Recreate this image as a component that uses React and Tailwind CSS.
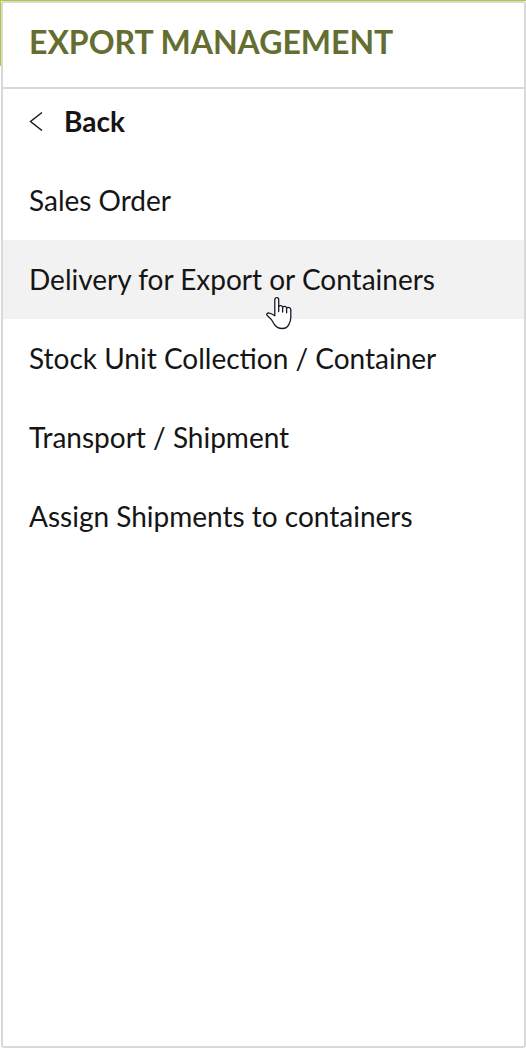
const items = [
  { label: "Sales Order" },
  { label: "Delivery for Export or Containers", active: true },
  { label: "Stock Unit Collection / Container" },
  { label: "Transport / Shipment" },
  { label: "Assign Shipments to containers" },
];

function HandCursor() {
  return (
    <svg
      className="pointer-events-none absolute top-14 left-[262px] z-10 h-[34px] w-7"
      viewBox="0 0 28 34"
      fill="white"
      stroke="#17172b"
      strokeWidth="1.3"
      strokeLinecap="round"
      strokeLinejoin="round"
      aria-hidden="true"
    >
      <path d="M9.8 19.8V3.8C9.8 2.4 10.6 1.7 11.7 1.7S13.7 2.4 13.7 3.8V10.2C14.8 9.3 17.2 9.3 17.6 11.2C18.8 10 21.2 10.2 21.6 12C22.8 10.9 25.8 11.4 25.8 13.8V21.5C25.8 24.5 25 26.4 23.8 28.6C22.4 31.4 20 32.5 17.4 32.5C13 32.5 10.8 31 8.8 27.6C7.4 24.6 5 21.8 2.3 19.6C0.8 18.2 2.3 16.7 4.4 17.1C6.2 17.4 8.1 18.6 9.8 19.8Z" />
      <path d="M13.7 10V15.5M17.6 11.2V16M21.6 12V16.8" fill="none" />
    </svg>
  );
}

export default function App() {
  return (
    <div className="flex min-h-screen border-t border-[#b5c833] bg-white font-['Lato','Carlito',sans-serif] text-[28px] leading-9 text-[#151515]">
      <div className="h-[65px] w-px shrink-0 bg-[#b5c833]" />
      <main className="min-w-0 flex-1 rounded-[3px] border-2 border-[#d9d9d9]">
        <header className="border-b-2 border-[#d9d9d9] px-[26px] pt-[19px] pb-[25px]">
          <h1 className="text-[32px] leading-10 font-bold text-[#646e31]">EXPORT MANAGEMENT</h1>
        </header>
        <nav aria-label="Export management">
          <button type="button" className="mb-1.5 flex h-[66px] w-full items-center gap-5 px-[26px] pb-0.5 font-bold">
            <svg className="h-5 w-[15px]" viewBox="0 0 15 20" fill="none" stroke="currentColor" strokeWidth="1.4" aria-hidden="true">
              <path d="M13 1.5L1.5 10.5L13 19.5" />
            </svg>
            Back
          </button>
          <ul>
            {items.map((item) => (
              <li key={item.label} className="relative">
                <a
                  href="#"
                  className={`flex h-[79px] items-center px-[26px] pb-0.5 ${item.active ? "bg-[#f2f2f2]" : "hover:bg-[#f2f2f2]"}`}
                >
                  {item.label}
                </a>
                {item.active && <HandCursor />}
              </li>
            ))}
          </ul>
        </nav>
      </main>
    </div>
  );
}
